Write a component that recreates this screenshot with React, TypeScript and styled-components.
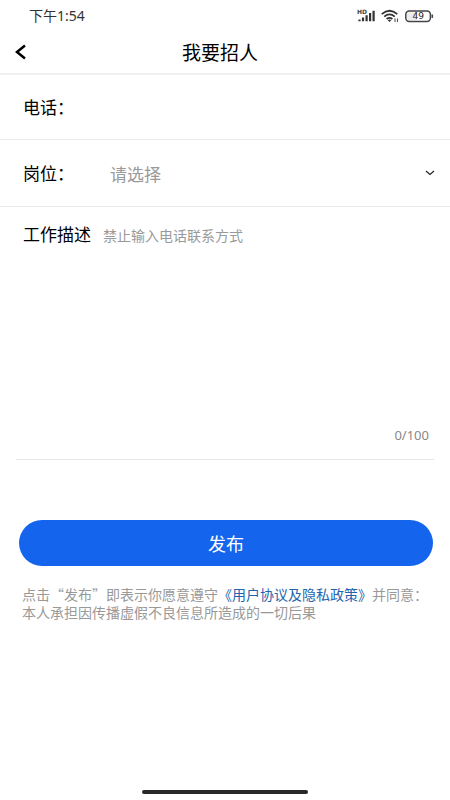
import React, { useState } from "react";
import styled, { createGlobalStyle } from "styled-components";

const GlobalStyle = createGlobalStyle`
  *, *::before, *::after { box-sizing: border-box; }
  body { margin: 0; background: #fff; }
  body, button, input, select, textarea {
    font-family: "Noto Sans CJK SC", "Noto Sans", sans-serif;
  }
`;

const Screen = styled.div`
  min-height: 100vh;
  display: flex;
  flex-direction: column;
  background: #fff;
  color: #111;
`;

const StatusBar = styled.div`
  height: 32px;
  padding: 0 16px 0 29px;
  display: flex;
  align-items: center;
  justify-content: space-between;
  font-family: "Noto Sans", "Noto Sans CJK SC", sans-serif;
  font-size: 14px;
  line-height: 20px;
  color: #333;
`;

const StatusIcons = styled.div`
  display: flex;
  align-items: center;
  gap: 6px;
`;

const NavBar = styled.header`
  height: 43px;
  display: grid;
  grid-template-columns: 40px 1fr 50px;
  align-items: center;
  border-bottom: 2px solid #f0f0f0;
`;

const BackButton = styled.button`
  height: 40px;
  padding: 0 0 2px 14px;
  border: 0;
  background: none;
  display: flex;
  align-items: center;
  cursor: pointer;
`;

const Title = styled.h1`
  margin: 0;
  padding-bottom: 2px;
  font-size: 19px;
  line-height: 38px;
  font-weight: 400;
  color: #000;
  text-align: center;
`;

const Form = styled.form`
  display: flex;
  flex-direction: column;
`;

const Row = styled.div<{ $height: number }>`
  height: ${(p) => p.$height}px;
  padding: 0 14px 0 23px;
  display: flex;
  align-items: center;
  border-bottom: 1px solid #ebebeb;
`;

const Label = styled.label`
  font-size: 17px;
  line-height: 24px;
  color: #000;
  white-space: nowrap;
`;

const RowLabel = styled(Label)`
  width: 87px;
`;

const Input = styled.input`
  flex: 1;
  min-width: 0;
  height: 40px;
  padding: 0;
  border: 0;
  outline: 0;
  background: none;
  font-size: 17px;
`;

const Select = styled.select`
  flex: 1;
  min-width: 0;
  height: 40px;
  padding: 0;
  border: 0;
  outline: 0;
  appearance: none;
  background: none;
  font-size: 17px;
  color: #999;
`;

const Description = styled.div`
  margin: 0 16px;
  padding: 15px 5px 14px 7px;
  display: flex;
  flex-direction: column;
  border-bottom: 1px solid #e6e6e6;
`;

const DescriptionHead = styled.div`
  display: flex;
  align-items: baseline;
  gap: 12px;
`;

const Hint = styled.span`
  font-size: 14px;
  line-height: 24px;
  color: #999;
`;

const TextArea = styled.textarea`
  height: 178px;
  padding: 8px 0;
  border: 0;
  outline: 0;
  resize: none;
  background: none;
  font-size: 14px;
  line-height: 20px;
`;

const Counter = styled.output`
  align-self: flex-end;
  font-family: "Noto Sans", sans-serif;
  font-size: 13px;
  line-height: 20px;
  color: #888;
`;

const Submit = styled.button`
  height: 46px;
  margin: 60px 17px 0 19px;
  border: 0;
  border-radius: 23px;
  background: #1464ed;
  color: #fff;
  font-size: 18px;
  line-height: 24px;
  cursor: pointer;
`;

const Legal = styled.p`
  margin: 19px 16px 0 22px;
  font-size: 14px;
  line-height: 18px;
  color: #999;
`;

const LegalLink = styled.a`
  color: #2463ad;
  text-decoration: none;
`;

const HomeIndicator = styled.div`
  width: 37%;
  height: 4px;
  margin: auto auto 6px;
  border-radius: 2px;
  background: #292929;
`;

const Signal = () => (
  <svg width="18" height="14" viewBox="0 0 18 14" aria-hidden="true">
    <text x="0" y="5" fontSize="6" fontFamily="DejaVu Sans, sans-serif" fontWeight="700" fill="#444">HD</text>
    <g stroke="#333" strokeWidth="2.2">
      <path d="M2.5 10.5v1.8M6 8.5v3.8M9.6 6.3v6M13.1 4v8.3M16.6 1.8v10.5" />
    </g>
  </svg>
);

const Wifi = () => (
  <svg width="18" height="14" viewBox="0 0 18 14" aria-hidden="true">
    <g fill="none" stroke="#333" strokeWidth="1.7">
      <path d="M.7 5.2Q8.5-1.7 16.3 5.2" />
      <path d="M3.2 7.7Q8.5 3.2 13.8 7.7" />
      <path d="M5.6 10Q8.5 7.6 11.4 10" />
    </g>
    <path d="M6.8 11.2Q8.5 10 10.2 11.2L8.5 13z" fill="#333" />
    <path d="M14 9.5v3.5M16.5 9.5v3.5" stroke="#555" strokeWidth="1.1" />
  </svg>
);

const Battery = () => (
  <svg width="29" height="14" viewBox="0 0 29 14" aria-hidden="true">
    <rect x=".8" y="2" width="24.6" height="10.4" rx="3.4" fill="#fff" stroke="#444" strokeWidth="1.5" />
    <path d="M3.8 3.5H12v7.4H3.8Q2.2 10.9 2.2 9.2V5.2Q2.2 3.5 3.8 3.5z" fill="#ececec" />
    <path d="M27.3 5.5v3.4" stroke="#444" strokeWidth="1.6" />
    <text x="13.2" y="10.3" fontSize="9" textAnchor="middle" fontFamily="DejaVu Sans, sans-serif" fill="#222">49</text>
  </svg>
);

const BackIcon = () => (
  <svg width="14" height="16" viewBox="0 0 14 16" aria-hidden="true">
    <path d="M11 1.5L3 8l8 6.5" fill="none" stroke="#000" strokeWidth="2.5" />
  </svg>
);

const ChevronSvg = styled.svg`
  flex: none;
  pointer-events: none;
`;

const ChevronIcon = () => (
  <ChevronSvg width="12" height="8" viewBox="0 0 12 8" aria-hidden="true">
    <path d="M2 2l4 3.4L10 2" fill="none" stroke="#222" strokeWidth="1.2" />
  </ChevronSvg>
);

const LIMIT = 100;

export default function App() {
  const [text, setText] = useState("");

  return (
    <>
      <GlobalStyle />
      <Screen>
        <StatusBar>
          <span>下午1:54</span>
          <StatusIcons>
            <Signal />
            <Wifi />
            <Battery />
          </StatusIcons>
        </StatusBar>
        <NavBar>
          <BackButton type="button" aria-label="返回">
            <BackIcon />
          </BackButton>
          <Title>我要招人</Title>
        </NavBar>
        <Form onSubmit={(e) => e.preventDefault()}>
          <Row $height={65}>
            <RowLabel htmlFor="phone">电话：</RowLabel>
            <Input id="phone" type="tel" />
          </Row>
          <Row $height={67}>
            <RowLabel htmlFor="job">岗位：</RowLabel>
            <Select id="job" defaultValue="">
              <option value="">请选择</option>
            </Select>
            <ChevronIcon />
          </Row>
          <Description>
            <DescriptionHead>
              <Label htmlFor="description">工作描述</Label>
              <Hint>禁止输入电话联系方式</Hint>
            </DescriptionHead>
            <TextArea
              id="description"
              maxLength={LIMIT}
              value={text}
              onChange={(e) => setText(e.target.value)}
            />
            <Counter htmlFor="description">
              {`${text.length}/${LIMIT}`}
            </Counter>
          </Description>
          <Submit type="submit">发布</Submit>
        </Form>
        <Legal>
          点击“发布”即表示你愿意遵守
          <LegalLink href="#agreement">《用户协议及隐私政策》</LegalLink>
          并同意：
          <br />
          本人承担因传播虚假不良信息所造成的一切后果
        </Legal>
        <HomeIndicator />
      </Screen>
    </>
  );
}
